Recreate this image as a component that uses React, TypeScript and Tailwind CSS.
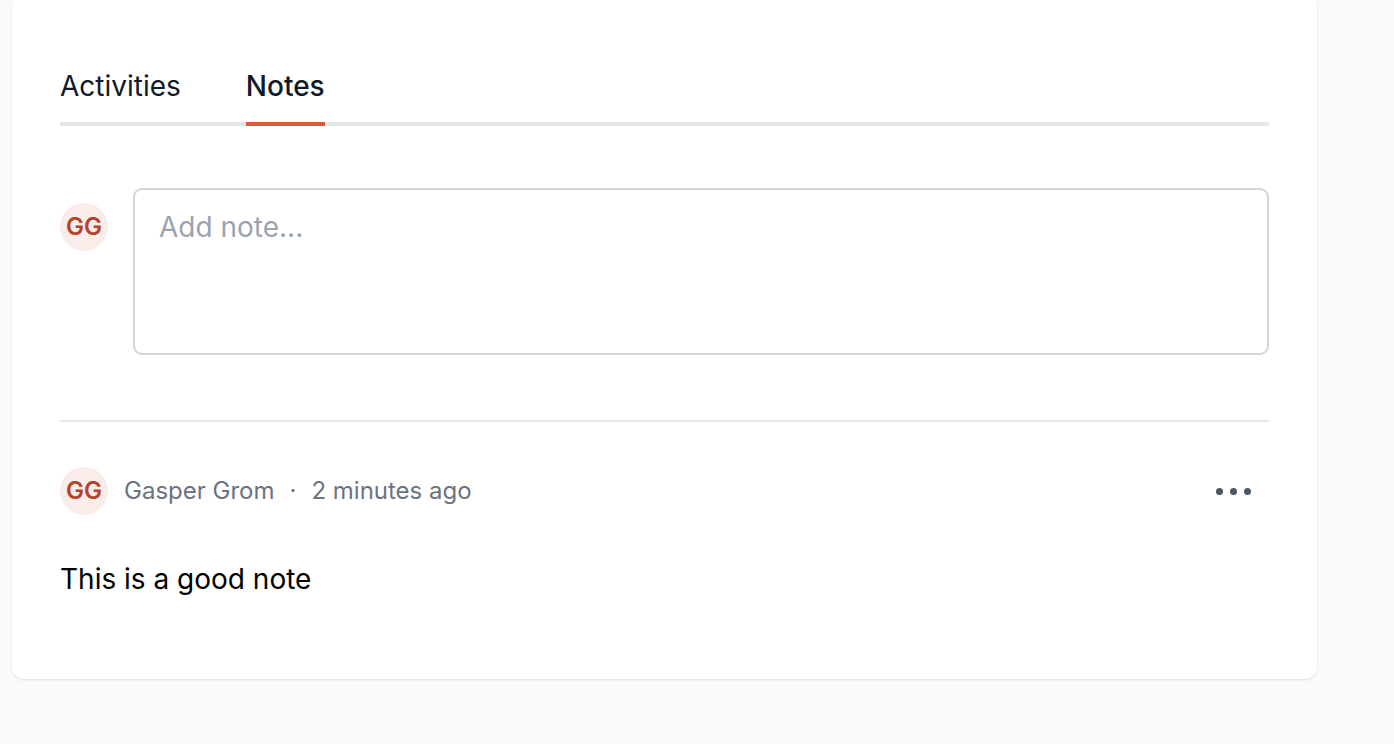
import React from "react";

export default function App() {
  return (
    <div className="min-h-[744px] w-full bg-[#f9fafb] overflow-hidden" style={{ fontFamily: "Inter, 'Noto Sans', sans-serif" }}>
      <div className="-mt-[6px] ml-[12px] w-[1305px] rounded-[12px] bg-white shadow-[0_1px_3px_rgba(0,0,0,0.08),0_1px_2px_rgba(0,0,0,0.04)] px-[48px] pt-[72px] pb-[82px]">
        {/* Tabs */}
        <div className="flex gap-[65px] border-b-[4px] border-[#e5e7eb]">
          <button className="-mb-[4px] pb-[16px] border-b-[4px] border-transparent text-[28px] leading-[40px] text-[#111827]">Activities</button>
          <button className="-mb-[4px] pb-[16px] border-b-[4px] border-[#dc5a3a] text-[28px] leading-[40px] font-medium text-[#111827]">Notes</button>
        </div>

        {/* Add note */}
        <div className="mt-[62px] flex gap-[25px]">
          <div className="mt-[15px] flex h-[48px] w-[48px] shrink-0 items-center justify-center rounded-full bg-[#faece8] text-[24px] font-semibold text-[#b2432b]">GG</div>
          <textarea
            placeholder="Add note..."
            className="h-[167px] flex-1 resize-none rounded-[9px] border-[2px] border-[#d1d5db] px-[24px] py-[18px] text-[28px] leading-[38px] text-[#111827] placeholder:text-[#9ca3af] outline-none"
          />
        </div>

        <div className="mt-[65px] h-[2px] bg-[#e5e7eb]" />

        {/* Note */}
        <div className="mt-[45px] flex items-center">
          <div className="flex h-[48px] w-[48px] shrink-0 items-center justify-center rounded-full bg-[#faece8] text-[24px] font-semibold text-[#b2432b]">GG</div>
          <span className="ml-[16px] text-[24px] text-[#6b7280]">Gasper Grom</span>
          <span className="mx-[15px] text-[24px] text-[#6b7280]">·</span>
          <span className="text-[24px] text-[#6b7280]">2 minutes ago</span>
          <div className="ml-auto mr-[18px] flex gap-[7px]">
            <span className="h-[7px] w-[7px] rounded-full bg-[#4b5563]" />
            <span className="h-[7px] w-[7px] rounded-full bg-[#4b5563]" />
            <span className="h-[7px] w-[7px] rounded-full bg-[#4b5563]" />
          </div>
        </div>
        <p className="mt-[46px] text-[28px] leading-[36px] text-black">This is a good note</p>
      </div>
    </div>
  );
}
